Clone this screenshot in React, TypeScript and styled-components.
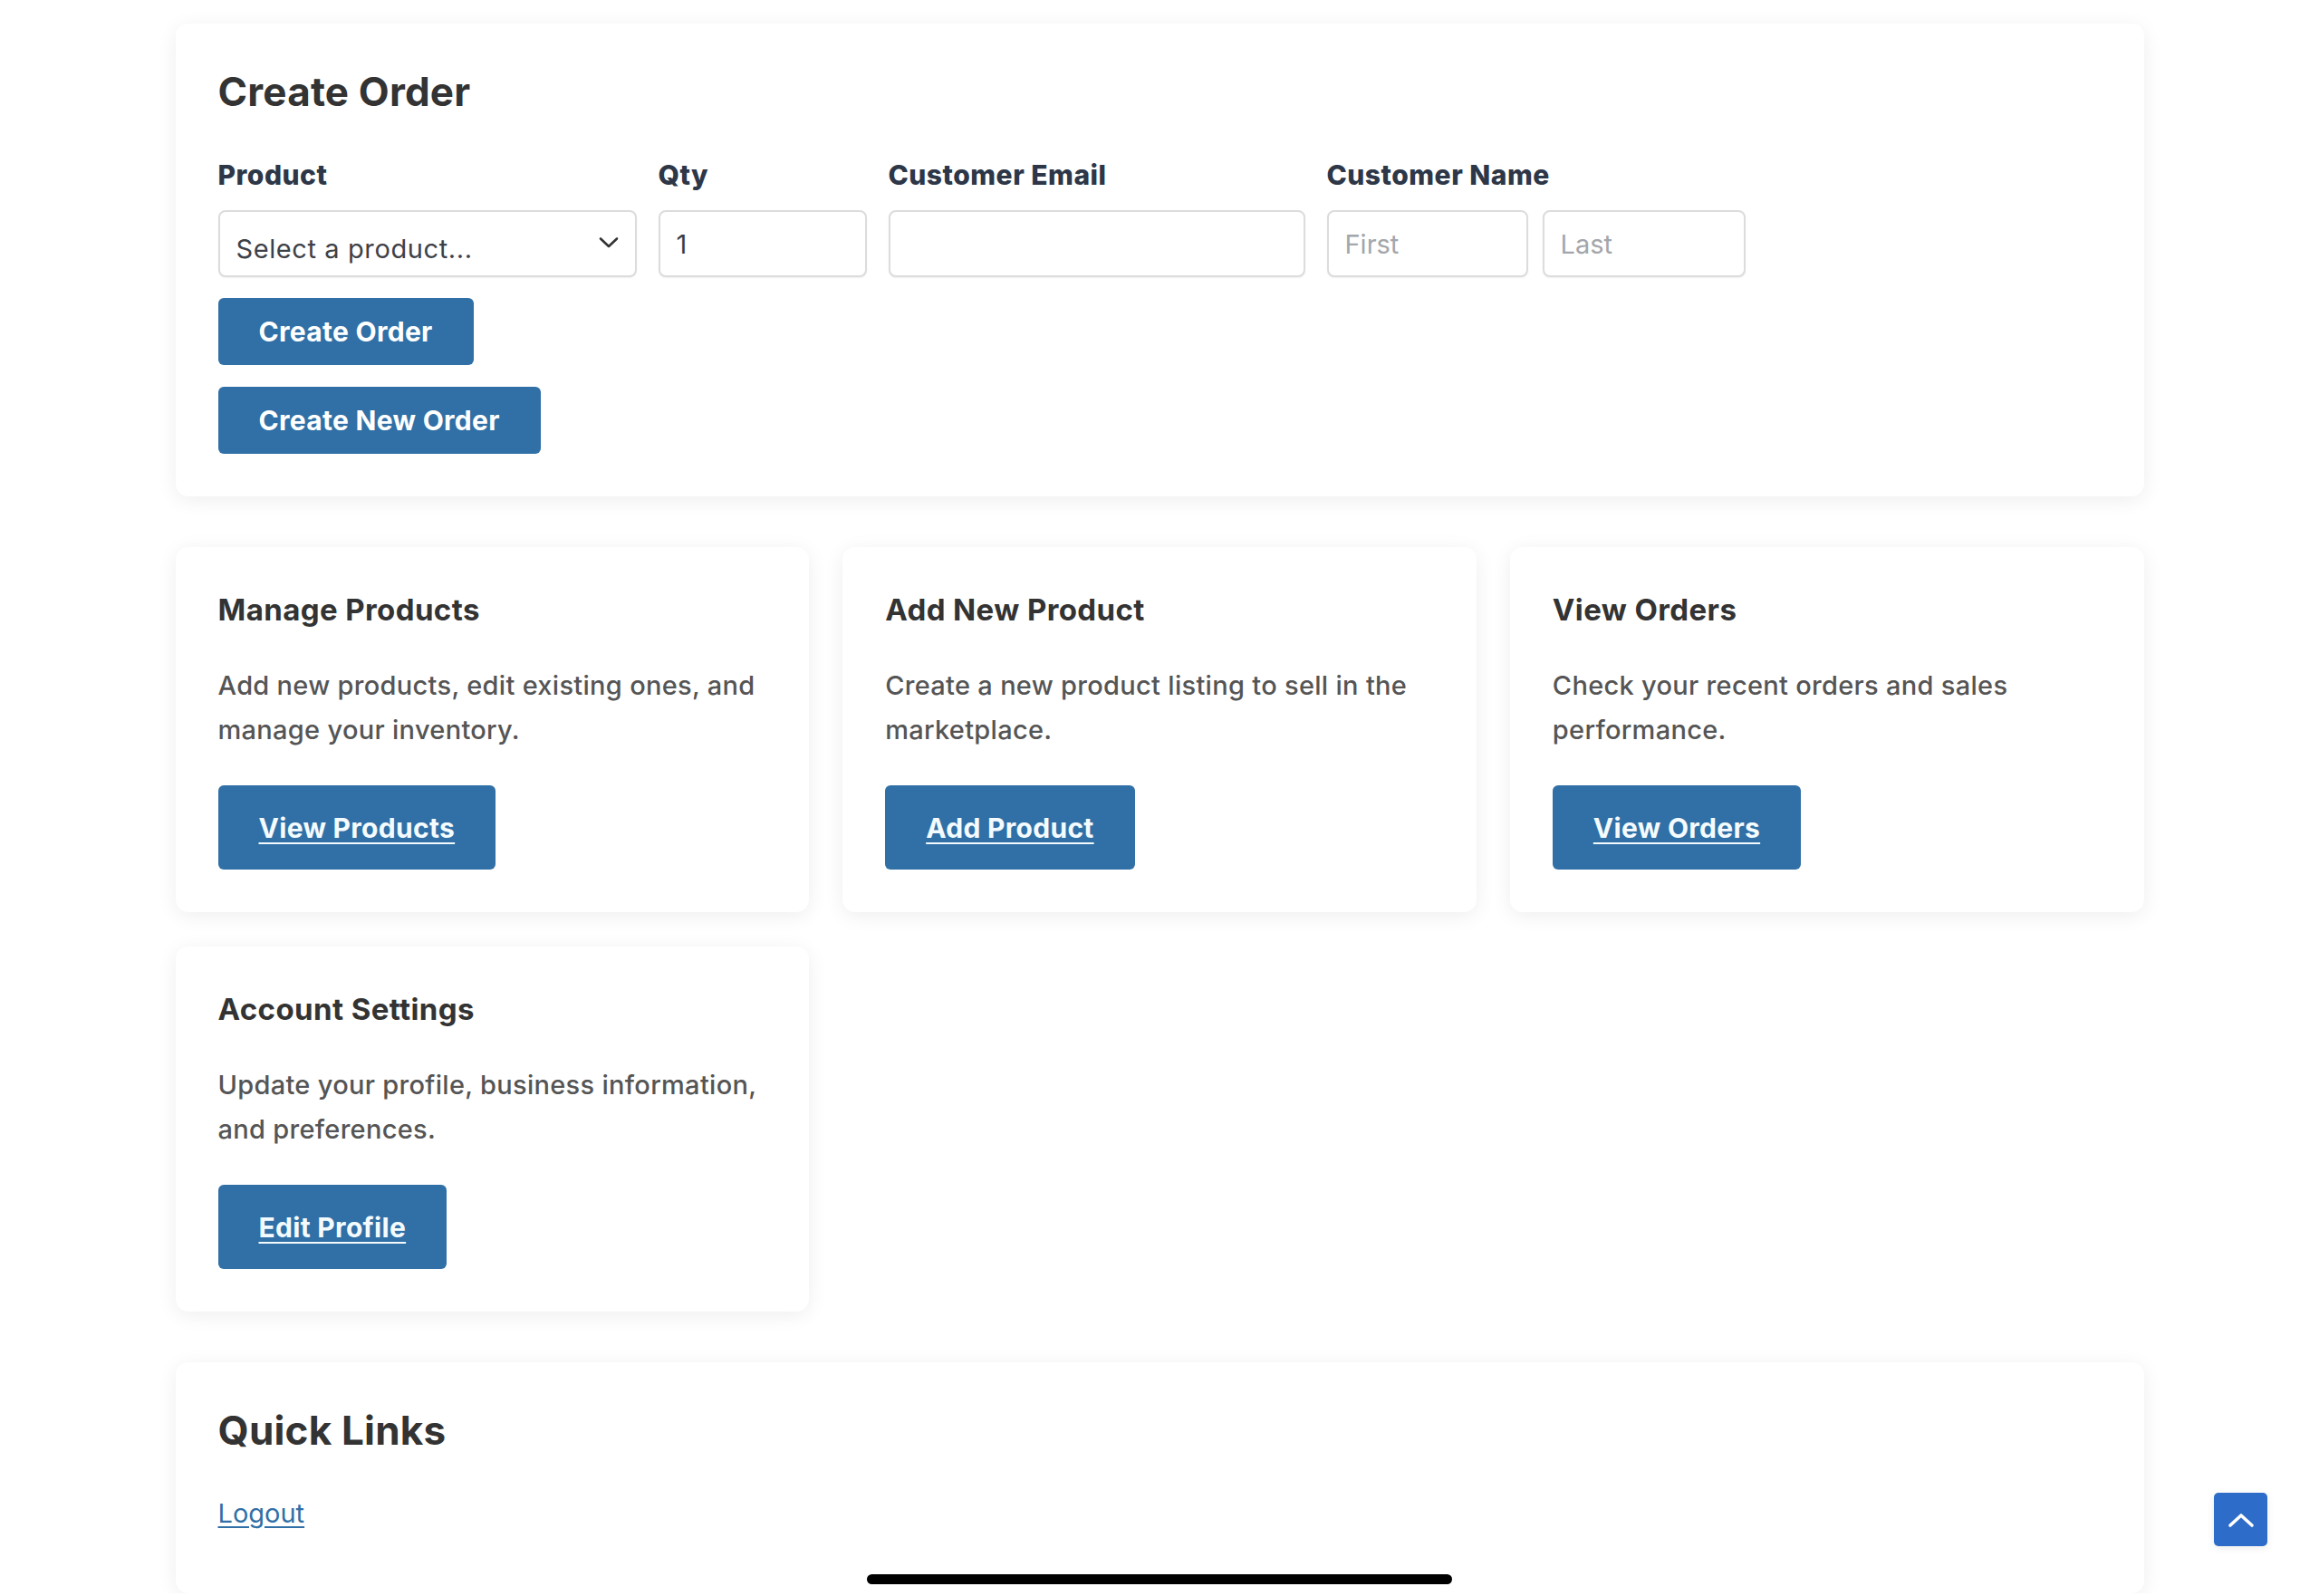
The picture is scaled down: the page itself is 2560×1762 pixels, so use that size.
import React from "react";
import styled, { createGlobalStyle } from "styled-components";

const GlobalStyle = createGlobalStyle`
  html, body {
    margin: 0;
    padding: 0;
    background: #ffffff;
  }
  body {
    font-family: "Inter", "Noto Sans", "Liberation Sans", sans-serif;
    color: #333333;
  }
  * {
    box-sizing: border-box;
  }
`;

const Page = styled.div`
  width: 2173px;
  margin: 0 auto;
  padding: 26px 0 0;
  display: flex;
  flex-direction: column;
  gap: 56px;
`;

const Card = styled.section`
  background: #ffffff;
  border-radius: 14px;
  box-shadow: 0 4px 22px rgba(0, 0, 0, 0.07);
  padding: 47px;
`;

const SectionTitle = styled.h2`
  margin: 0;
  font-size: 44px;
  line-height: 56px;
  font-weight: 700;
  letter-spacing: 0.2px;
  color: #333333;
`;

const FieldRow = styled.div`
  display: flex;
  gap: 24px;
  margin-top: 47px;
  align-items: flex-end;
`;

const Field = styled.div<{ $width?: number }>`
  display: flex;
  flex-direction: column;
  gap: 22px;
  width: ${(p) => (p.$width ? `${p.$width}px` : "auto")};
`;

const Label = styled.label`
  font-size: 30px;
  line-height: 34px;
  font-weight: 800;
  color: #2d3748;
  letter-spacing: 0.5px;
`;

const Input = styled.input<{ $width?: number }>`
  height: 74px;
  width: ${(p) => (p.$width ? `${p.$width}px` : "100%")};
  border: 2px solid #dcdcdc;
  border-radius: 8px;
  box-shadow: 0 1px 2px rgba(0, 0, 0, 0.06);
  padding: 0 18px;
  font-family: inherit;
  font-size: 29px;
  color: #3a3f47;
  background: #ffffff;
  outline: none;

  &::placeholder {
    color: #a3a6ab;
  }
`;

const SelectWrap = styled.div`
  position: relative;
  width: 100%;
`;

const Select = styled.select`
  appearance: none;
  -webkit-appearance: none;
  width: 100%;
  height: 74px;
  border: 2px solid #dcdcdc;
  border-radius: 8px;
  box-shadow: 0 1px 2px rgba(0, 0, 0, 0.06);
  padding: 10px 60px 0 18px;
  font-family: inherit;
  font-size: 29px;
  letter-spacing: 0.6px;
  color: #3d4148;
  background: #ffffff;
  outline: none;
`;

const Chevron = styled.svg`
  position: absolute;
  right: 20px;
  top: 29px;
  pointer-events: none;
`;

const NameInputs = styled.div`
  display: flex;
  gap: 16px;
`;

const ButtonStack = styled.div`
  display: flex;
  flex-direction: column;
  align-items: flex-start;
  gap: 24px;
  margin-top: 23px;
`;

const PrimaryButton = styled.button`
  height: 74px;
  padding: 0 45px;
  border: none;
  border-radius: 6px;
  background: #3070a6;
  color: #ffffff;
  font-family: inherit;
  font-size: 30px;
  font-weight: 700;
  letter-spacing: 0.3px;
  cursor: pointer;
`;

const Grid = styled.div`
  display: grid;
  grid-template-columns: repeat(3, 1fr);
  column-gap: 37px;
  row-gap: 38px;
`;

const CardTitle = styled.h3`
  margin: 0;
  font-size: 33px;
  line-height: 45px;
  font-weight: 700;
  letter-spacing: 0.4px;
  color: #333333;
`;

const CardText = styled.p`
  margin: 36px 0 0;
  font-size: 29px;
  line-height: 49px;
  font-weight: 450;
  color: #555555;
  letter-spacing: 0.3px;
`;

const LinkButton = styled.a`
  display: inline-flex;
  align-items: center;
  height: 93px;
  margin-top: 37px;
  padding: 0 45px;
  border-radius: 6px;
  background: #3070a6;
  color: #f4fbff;
  font-size: 30px;
  font-weight: 700;
  letter-spacing: 0.3px;
  text-decoration: underline;
  text-decoration-thickness: 2px;
  text-underline-offset: 5px;
`;

const LinkList = styled.div`
  margin: 46px 0 24px;
`;

const TextLink = styled.a`
  font-size: 29px;
  line-height: 35px;
  color: #3070a6;
  text-decoration: underline;
  text-decoration-thickness: 2px;
  text-underline-offset: 4px;
`;

const ScrollTop = styled.button`
  position: fixed;
  right: 57px;
  bottom: 55px;
  width: 59px;
  height: 59px;
  border: none;
  border-radius: 5px;
  background: #2d6cc8;
  display: flex;
  align-items: center;
  justify-content: center;
  padding: 0;
  box-shadow: 0 2px 8px rgba(0, 0, 0, 0.08);
`;

const HomeIndicator = styled.div`
  position: fixed;
  left: 957px;
  bottom: 13px;
  width: 646px;
  height: 11px;
  border-radius: 6px;
  background: #000000;
`;

const tiles = [
  {
    title: "Manage Products",
    text: "Add new products, edit existing ones, and manage your inventory.",
    action: "View Products",
  },
  {
    title: "Add New Product",
    text: "Create a new product listing to sell in the marketplace.",
    action: "Add Product",
  },
  {
    title: "View Orders",
    text: "Check your recent orders and sales performance.",
    action: "View Orders",
  },
  {
    title: "Account Settings",
    text: "Update your profile, business information, and preferences.",
    action: "Edit Profile",
  },
];

export default function App() {
  return (
    <>
      <GlobalStyle />
      <Page>
        <Card>
          <SectionTitle>Create Order</SectionTitle>
          <FieldRow>
            <Field $width={462}>
              <Label>Product</Label>
              <SelectWrap>
                <Select defaultValue="">
                  <option value="">Select a product...</option>
                </Select>
                <Chevron width="22" height="14" viewBox="0 0 22 14" fill="none">
                  <path
                    d="M2 2.5 L11 11 L20 2.5"
                    stroke="#333"
                    strokeWidth="2.6"
                    strokeLinecap="round"
                    strokeLinejoin="round"
                  />
                </Chevron>
              </SelectWrap>
            </Field>
            <Field $width={230}>
              <Label>Qty</Label>
              <Input type="number" defaultValue={1} />
            </Field>
            <Field $width={460}>
              <Label>Customer Email</Label>
              <Input type="email" />
            </Field>
            <Field>
              <Label>Customer Name</Label>
              <NameInputs>
                <Input $width={222} placeholder="First" />
                <Input $width={224} placeholder="Last" />
              </NameInputs>
            </Field>
          </FieldRow>
          <ButtonStack>
            <PrimaryButton>Create Order</PrimaryButton>
            <PrimaryButton>Create New Order</PrimaryButton>
          </ButtonStack>
        </Card>

        <Grid>
          {tiles.map((t) => (
            <Card key={t.title}>
              <CardTitle>{t.title}</CardTitle>
              <CardText>{t.text}</CardText>
              <LinkButton href="#">{t.action}</LinkButton>
            </Card>
          ))}
        </Grid>

        <Card>
          <SectionTitle>Quick Links</SectionTitle>
          <LinkList>
            <TextLink href="#">Logout</TextLink>
          </LinkList>
        </Card>
      </Page>

      <ScrollTop aria-label="Back to top">
        <svg width="30" height="18" viewBox="0 0 30 18" fill="none">
          <path
            d="M3 15 L15 4 L27 15"
            stroke="#ffffff"
            strokeWidth="3.6"
            strokeLinecap="round"
            strokeLinejoin="round"
          />
        </svg>
      </ScrollTop>
      <HomeIndicator />
    </>
  );
}
